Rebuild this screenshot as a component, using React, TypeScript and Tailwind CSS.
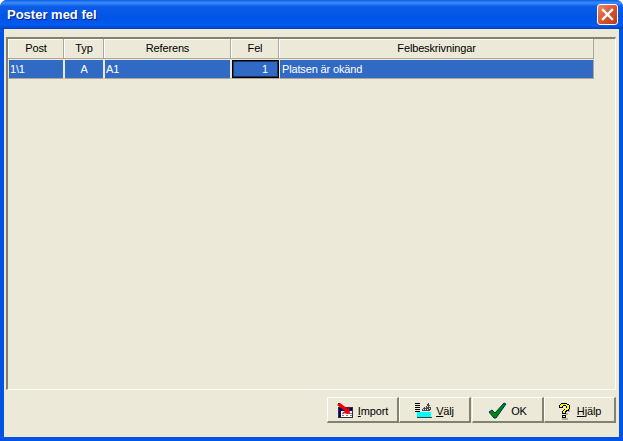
const COLUMNS = [
  { label: "Post", width: "w-[56px]" },
  { label: "Typ", width: "w-[40px]" },
  { label: "Referens", width: "w-[127px]" },
  { label: "Fel", width: "w-[48px]" },
  { label: "Felbeskrivningar", width: "w-[315px]" },
];

function ImportIcon() {
  return (
    <svg width="17" height="17" viewBox="0 0 17 17" shapeRendering="crispEdges">
      <rect x="1.5" y="6.5" width="14" height="10" fill="#fff" stroke="#303030" />
      <rect x="2" y="7" width="13" height="3" fill="#000080" />
      <path d="M2 10h2v6H2z" fill="#000080" />
      <path d="M5 12h2v1H5zM9 12h2v1H9zM13 12h2v1h-2zM5 14h2v1H5zM9 14h2v1H9zM13 14h2v1h-2z" fill="#7a7a7a" />
      <path d="M3 2L11 8L12 5L13 13L5 12L8 10L0 4z" fill="#ee0000" shapeRendering="auto" />
      <path d="M1 2h2v1H1z" fill="#7a0000" />
    </svg>
  );
}

function ValjIcon() {
  return (
    <svg width="17" height="17" viewBox="0 0 17 17" shapeRendering="crispEdges">
      <g transform="translate(0 2)">
        <path d="M0 0h5v1H0zM0 2h5v1H0zM0 4h5v1H0zM0 6h5v1H0zM0 8h5v1H0z" fill="#000" />
        <path d="M7 7l1-2h1V4h2V3h1V1h1V0h1v2h1v1h-1v1h2v3h-1v1H7z" fill="#4a4a4a" />
        <path d="M8 6h1v1H8zM10 4h1v1h-1zM12 6h1v1h-1zM12 3h1v1h-1zM14 5h1v1h-1zM10 6h1v1h-1z" fill="#e0e0e0" />
        <rect x="2" y="9" width="14" height="5" fill="#00ffff" />
        <rect x="2" y="14" width="15" height="1" fill="#3a3a3a" />
      </g>
    </svg>
  );
}

function CheckIcon() {
  return (
    <svg className="mt-[2px]" width="19" height="17" viewBox="0 0 19 17">
      <path d="M1 10l3-2 3 3L16 1l2 1L8 16H6z" fill="#008a00" stroke="#002a70" strokeWidth="1" />
    </svg>
  );
}

function HelpIcon() {
  return (
    <svg className="mt-[4px]" width="13" height="17" viewBox="0 0 13 17" shapeRendering="crispEdges">
      <path d="M4 15h6v2H4zM10 6h2v3h-2zM7 10h3v2H7z" fill="#b0b0b0" />
      <path d="M3 0h6v1h2v1h1v4h-1v2H9v1H8v2H4V8h1V7h1V6h2V3H5v2H1V2h1V1h1zM4 12h4v3H4z" fill="#000" />
      <path d="M3 1h6v1h2v4h-1v1H8v1H7v2H5V8h1V7h1V6h1V5h1V3H8V2H5v1H4v1H2V2h1zM5 13h2v1H5z" fill="#ffff00" />
    </svg>
  );
}

function CloseButton() {
  return (
    <div className="flex h-[21px] w-[21px] items-center justify-center rounded-[3px] border border-white bg-[linear-gradient(135deg,#e88a6c,#d9512c_55%,#b93a14)]">
      <svg width="13" height="13" viewBox="0 0 13 13">
        <path d="M2 2l9 9M11 2l-9 9" stroke="#fff" strokeWidth="2.4" strokeLinecap="square" />
      </svg>
    </div>
  );
}

function ToolButton({ icon, label, underline, gap }: { icon: React.ReactNode; label: string; underline: boolean; gap: string }) {
  return (
    <button className={`flex h-[26px] w-[72px] items-center justify-center border-t border-l border-t-white border-l-white border-r-2 border-b-2 border-r-[#85816f] border-b-[#85816f] bg-[#ece9d8] text-[11px] tracking-[-0.15px] text-black ${gap}`}>
      {icon}
      <span className="pt-[3px]">
        {underline ? <span className="underline">{label[0]}</span> : label[0]}
        {label.slice(1)}
      </span>
    </button>
  );
}

export default function App() {
  return (
    <div className="flex h-[441px] w-[623px] flex-col overflow-hidden rounded-t-[7px] bg-[#0054e3] font-['Liberation_Sans',sans-serif]">
      {/* Title bar */}
      <div className="flex h-[29px] shrink-0 items-center justify-between bg-[linear-gradient(180deg,#0a5fe6_0%,#3c8dfa_10%,#0a5ce8_22%,#0055e5_60%,#0059ef_88%,#0040b8_100%)] pl-[7px] pr-[5px]">
        <span className="pt-[1px] text-[13px] font-bold text-white [text-shadow:1px_1px_0_#0f1f8c]">Poster med fel</span>
        <CloseButton />
      </div>

      {/* Dialog body */}
      <div className="mx-[4px] mb-[4px] flex min-h-0 flex-1 flex-col bg-[#ece9d8] pt-[8px]">
        <div className="ml-[2px] mr-[3px] flex h-[353px] shrink-0 flex-col border-t-2 border-l-2 border-r border-b border-t-[#85816f] border-l-[#85816f] border-r-white border-b-white">
          <div className="flex">
            {COLUMNS.map((col) => (
              <div key={col.label} className={`flex h-[20px] items-center justify-center border-r border-b border-r-[#aca899] border-b-[#aca899] pl-[1px] text-[11px] tracking-[-0.15px] text-black shadow-[inset_1px_1px_0_#fff] ${col.width}`}>
                {col.label}
              </div>
            ))}
          </div>
          <div className="flex h-[20px] text-[11px] tracking-[-0.15px] text-white">
            <div className="flex w-[56px] items-center border border-[#ece9d8] border-b-[#aca899] bg-[#316ac5] pl-[1px]">1\1</div>
            <div className="flex w-[40px] items-center justify-center border border-[#ece9d8] border-b-[#aca899] bg-[#316ac5]">A</div>
            <div className="flex w-[127px] items-center border border-[#ece9d8] border-b-[#aca899] bg-[#316ac5] pl-[1px]">A1</div>
            <div className="flex w-[48px] items-center border-t border-l border-b border-[#ece9d8] border-b-[#aca899]">
              <div className="flex h-full w-full items-center justify-end border border-black bg-[#316ac5] pr-[10px] shadow-[inset_0_0_0_1px_#1b3560]">1</div>
            </div>
            <div className="flex w-[315px] items-center border border-[#ece9d8] border-r-[#aca899] border-b-[#aca899] bg-[#316ac5] pl-[2px]">Platsen är okänd</div>
          </div>
        </div>

        {/* Buttons */}
        <div className="mr-[3px] mt-[7px] flex justify-end">
          <ToolButton icon={<ImportIcon />} label="Import" underline gap="gap-[4px]" />
          <ToolButton icon={<ValjIcon />} label="Välj" underline gap="gap-[4px]" />
          <div className="ml-[1px]">
            <ToolButton icon={<CheckIcon />} label="OK" underline={false} gap="gap-[4px]" />
          </div>
          <ToolButton icon={<HelpIcon />} label="Hjälp" underline gap="gap-[6px]" />
        </div>
      </div>
    </div>
  );
}
